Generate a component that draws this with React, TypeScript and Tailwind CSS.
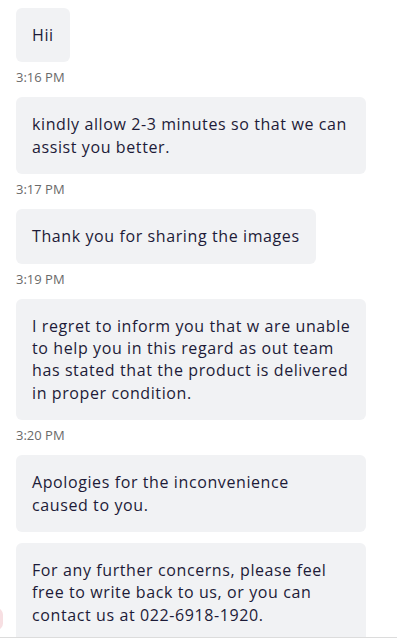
import React from "react";

type Msg = { lines: string[]; wide?: boolean; time?: string };

const msgs: Msg[] = [
  { lines: ["Hii"], time: "3:16 PM" },
  { lines: ["kindly allow 2-3 minutes so that we can", "assist you better."], wide: true, time: "3:17 PM" },
  { lines: ["Thank you for sharing the images"], time: "3:19 PM" },
  {
    lines: [
      "I regret to inform you that w are unable",
      "to help you in this regard as out team",
      "has stated that the product is delivered",
      "in proper condition.",
    ],
    wide: true,
    time: "3:20 PM",
  },
  { lines: ["Apologies for the inconvenience", "caused to you."], wide: true },
  {
    lines: [
      "For any further concerns, please feel",
      "free to write back to us, or you can",
      "contact us at 022-6918-1920.",
    ],
    wide: true,
  },
];

export default function App() {
  return (
    <div
      className="relative w-[397px] h-[640px] bg-white overflow-hidden"
      style={{ fontFamily: '"Open Sans", "Liberation Sans", sans-serif' }}
    >
      <div className="h-[637px] overflow-hidden pt-2 px-4 flex flex-col gap-[11px]">
        {msgs.map((m, i) => (
          <div key={i} className="flex flex-col items-start">
            <div
              className={
                (m.wide ? "w-[350px] " : "w-fit ") +
                "bg-[#f1f2f4] rounded-md px-4 py-4 text-[16px] leading-[22.4px] text-[#1d1b38] whitespace-nowrap tracking-[0.6px]"
              }
            >
              {m.lines.map((l, j) => (
                <div key={j}>{l}</div>
              ))}
            </div>
            {m.time && (
              <div className="h-[24px] pt-[7px] text-[13px] leading-4 text-[#6a6a6a] tracking-[0px]">
                {m.time}
              </div>
            )}
          </div>
        ))}
      </div>
      <div className="h-px bg-[#dcdcdc]" />
      <div className="absolute left-[-10px] top-[608px] w-[13px] h-[22px] rounded-full bg-[#f7dfe2]" />
    </div>
  );
}
